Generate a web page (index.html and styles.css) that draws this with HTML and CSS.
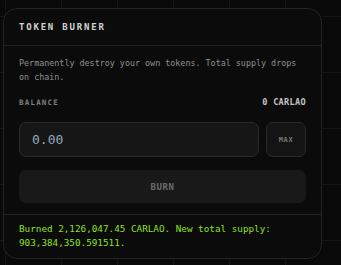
FILE: index.html
```html
<!DOCTYPE html>
<html lang="en">
<head>
    <meta charset="UTF-8">
    <meta name="viewport" content="width=device-width, initial-scale=1.0">
    <title>Token Burner</title>
    <link rel="stylesheet" href="styles.css">
</head>
<body>
    <div class="card">
        <!-- Header -->
        <div class="card-header">
            <h2>TOKEN BURNER</h2>
        </div>

        <!-- Burn form -->
        <div class="card-body">
            <p class="desc">Permanently destroy your own tokens. Total supply drops on chain.</p>
            <div class="balance-row">
                <span class="label">BALANCE</span>
                <span class="balance">0 CARLAO</span>
            </div>
            <div class="amount-row">
                <input type="text" class="amount" placeholder="0.00">
                <button class="max-btn">MAX</button>
            </div>
            <button class="burn-btn">BURN</button>
        </div>

        <!-- Result -->
        <div class="card-footer">
            <p class="result">Burned 2,126,047.45 CARLAO. New total supply: 903,384,350.591511.</p>
        </div>
    </div>
</body>
</html>
```

FILE: styles.css
```css
body {
    margin: 0;
    padding: 8px 19px 0 3px;
    font-family: "DejaVu Sans Mono", monospace;
    background-color: #090909;
    background-image: linear-gradient(to right, #141612 1px, transparent 1px),
                      linear-gradient(to bottom, #141612 1px, transparent 1px);
    background-size: 56px 56px;
    background-position: 5px 16px;
    height: 265px;
    box-sizing: border-box;
    color: #ccc;
}
.card {
    border: 1px solid #242424;
    border-radius: 14px;
    background-color: #0b0b0b;
    overflow: hidden;
}
.card-header {
    padding: 0 15px;
    height: 36px;
    display: flex;
    align-items: center;
    border-bottom: 1px solid #222;
}
.card-header h2 {
    margin: 0;
    font-size: 9px;
    font-weight: bold;
    letter-spacing: 1.8px;
    color: #d4d4d4;
}
.card-body {
    padding: 10px 15px 11px;
    border-bottom: 1px solid #222;
}
.desc {
    margin: 0;
    font-size: 8.4px;
    line-height: 14px;
    color: #909090;
}
.balance-row {
    display: flex;
    justify-content: space-between;
    align-items: center;
    margin-top: 11px;
    height: 14px;
}
.label {
    font-size: 7.5px;
    font-weight: bold;
    letter-spacing: 1.2px;
    color: #808080;
}
.balance {
    font-size: 8.6px;
    font-weight: bold;
    letter-spacing: 0.3px;
    color: #c4c4c4;
}
.amount-row {
    display: flex;
    gap: 7px;
    margin-top: 13px;
}
.amount {
    flex: 1;
    min-width: 0;
    height: 35px;
    box-sizing: border-box;
    padding: 0 12px;
    font-family: "DejaVu Sans Mono", monospace;
    font-size: 13px;
    color: #9fb4c8;
    background-color: #161616;
    border: 1px solid #2a2a2a;
    border-radius: 7px;
    outline: none;
}
.amount::placeholder {
    color: #93a9be;
}
.max-btn {
    width: 40px;
    height: 35px;
    font-family: "DejaVu Sans Mono", monospace;
    font-size: 7px;
    font-weight: bold;
    letter-spacing: 0.6px;
    color: #7a7a7a;
    background-color: #141414;
    border: 1px solid #2a2a2a;
    border-radius: 7px;
    padding: 0;
}
.burn-btn {
    display: block;
    width: 100%;
    height: 33px;
    margin-top: 13px;
    font-family: "DejaVu Sans Mono", monospace;
    font-size: 9px;
    font-weight: bold;
    letter-spacing: 0.6px;
    color: #6c6c6c;
    background-color: #191919;
    border: none;
    border-radius: 7px;
}
.card-footer {
    padding: 7px 15px 8px;
}
.result {
    margin: 0;
    font-size: 9.3px;
    line-height: 14px;
    color: #8ee024;
}
```
